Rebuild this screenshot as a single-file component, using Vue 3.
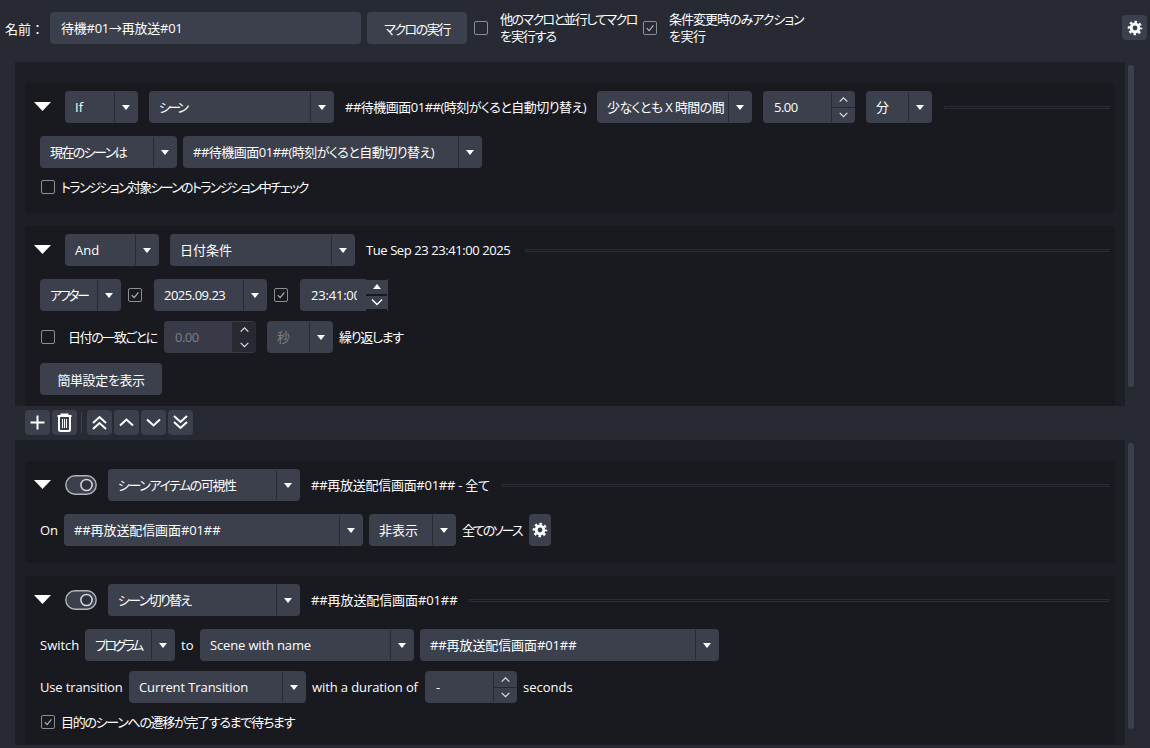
<script setup>
const combo = (t, w, ls = 0, extra = {}) => ({ k: 'combo', t, w, ls, ...extra })
const text = (t, w, ls = 0) => ({ k: 'text', t, w, ls })
const spin = (t, w, extra = {}) => ({ k: 'spin', t, w, ls: -0.5, ...extra })
const check = (w, on = false) => ({ k: 'check', w, on })

const conditions = [
  {
    pad: 'pad18',
    head: [combo('If', 73), combo('シーン', 185, -2.8), text('##待機画面01##(時刻がくると自動切り替え)', 241, -0.5), combo('少なくとも X 時間の間', 155, -0.6), spin('5.00', 92), combo('分', 66)],
    rows: [
      { items: [combo('現在のシーンは', 137, -1.6), combo('##待機画面01##(時刻がくると自動切り替え)', 299, -0.5)], cls: 'mt13' },
      { items: [check(15), text('トランジション対象シーンのトランジション中チェック', undefined, -1.7)], cls: 'short mt11' }
    ]
  },
  {
    pad: 'pad18',
    head: [combo('And', 94), combo('日付条件', 185), text('Tue Sep 23 23:41:00 2025', 147, -0.42)],
    rows: [
      { items: [combo('アフター', 81, -2.4), check(21, true), combo('2025.09.23', 113, -0.5), check(21, true), { k: 'time', t: '23:41:00' }], cls: 'mt13' },
      { items: [check(22), text('日付の一致ごとに', 90, -1.4), spin('0.00', 92, { dis: true }), combo('秒', 66, 0, { dis: true, ml: 5 }), text('繰り返します', undefined, -1.3)], cls: 'mt10' },
      { items: [{ k: 'btn', t: '簡単設定を表示', w: 122, ls: -0.4 }], cls: 'mt10' }
    ]
  }
]

const actions = [
  {
    pad: 'pad17',
    toggle: true,
    head: [combo('シーンアイテムの可視性', 192, -1.45), text('##再放送配信画面#01## - 全て', 179, -0.27)],
    rows: [
      { items: [text('On', 18), combo('##再放送配信画面#01##', 299, -0.1), combo('非表示', 87), text('全てのソース', 61, -2.1), { k: 'gear' }], cls: 'mt13' }
    ]
  },
  {
    pad: 'pad17',
    toggle: true,
    head: [combo('シーン切り替え', 192, -1.7), text('##再放送配信画面#01##', 146, -0.1)],
    rows: [
      { items: [text('Switch', 39), combo('プログラム', 90, -2.6), text('to', 13), combo('Scene with name', 214, -0.15), combo('##再放送配信画面#01##', 299, -0.1)], cls: 'mt13' },
      { items: [text('Use transition', 83, -0.15), combo('Current Transition', 177, -0.1), text('with a duration of', 107, -0.1), { ...spin('-', 92), ls: 0 }, text('seconds')], cls: 'mt10' },
      { items: [check(15, true), text('目的のシーンへの遷移が完了するまで待ちます', undefined, -1.3)], cls: 'short mt11' }
    ]
  }
]

const sections = [
  { name: 'upper', cards: conditions },
  { name: 'lower', cards: actions }
]

const tools = [
  { d: 'M6 13 L12.5 7 L19 13 M6 19 L12.5 13 L19 19' },
  { d: 'M6 15.5 L12.5 9.5 L19 15.5' },
  { d: 'M6 9.5 L12.5 15.5 L19 9.5' },
  { d: 'M6 6 L12.5 12 L19 6 M6 12 L12.5 18 L19 12' }
]

const itemStyle = (it) => ({
  width: it.w ? it.w + 'px' : undefined,
  marginLeft: it.ml ? it.ml + 'px' : undefined,
  letterSpacing: it.ls ? it.ls + 'px' : undefined
})
</script>

<template>
  <div class="app">
    <header class="topbar">
      <span class="name-label">名前：</span>
      <div class="name-input">待機#01→再放送#01</div>
      <button class="btn run">マクロの実行</button>
      <span class="box top-box"></span>
      <span class="wrap-label first"><span class="ln a">他のマクロと並行してマクロ</span><span class="ln b">を実行する</span></span>
      <span class="box top-box second">
        <svg viewBox="0 0 14 14" class="tick"><path d="M3.2 7.2 L6 10 L11 4" /></svg>
      </span>
      <span class="wrap-label"><span class="ln c">条件変更時のみアクション</span><span class="ln d">を実行</span></span>
      <button class="icon-btn top-gear">
        <svg viewBox="0 0 16 16" class="gear"><circle cx="8" cy="8" r="3.9" /><circle cx="8" cy="8" r="6.2" class="teeth" /></svg>
      </button>
    </header>

    <template v-for="(section, si) in sections" :key="section.name">
      <section class="band" :class="section.name">
        <div class="panel">
          <article v-for="(card, ci) in section.cards" :key="ci" class="card" :class="card.pad">
            <div class="row head">
              <span class="collapse"></span>
              <svg v-if="card.toggle" viewBox="0 0 32 20" class="toggle">
                <rect x="0.8" y="0.8" width="30.4" height="18.4" rx="9.2" />
                <circle cx="21.5" cy="10" r="5.6" />
              </svg>
              <template v-for="(it, ii) in card.head" :key="ii">
                <div v-if="it.k === 'combo'" class="combo" :style="itemStyle(it)">
                  <span class="val">{{ it.t }}</span><span class="arrow"></span>
                </div>
                <span v-else-if="it.k === 'text'" class="txt" :style="itemStyle(it)">{{ it.t }}</span>
                <div v-else-if="it.k === 'spin'" class="spin" :style="itemStyle(it)">
                  <span class="val">{{ it.t }}</span>
                  <span class="steps">
                    <svg viewBox="0 0 24 15"><path d="M8 10 L12 6 L16 10" /></svg>
                    <svg viewBox="0 0 24 15"><path d="M8 5 L12 9 L16 5" /></svg>
                  </span>
                </div>
              </template>
              <span class="rule"></span>
            </div>
            <div v-for="(row, ri) in card.rows" :key="ri" class="row body" :class="row.cls">
              <template v-for="(it, ii) in row.items" :key="ii">
                <div v-if="it.k === 'combo'" class="combo" :class="{ dis: it.dis }" :style="itemStyle(it)">
                  <span class="val">{{ it.t }}</span><span class="arrow"></span>
                </div>
                <span v-else-if="it.k === 'text'" class="txt" :style="itemStyle(it)">{{ it.t }}</span>
                <div v-else-if="it.k === 'spin'" class="spin" :class="{ dis: it.dis }" :style="itemStyle(it)">
                  <span class="val">{{ it.t }}</span>
                  <span class="steps">
                    <svg viewBox="0 0 24 15"><path d="M8 10 L12 6 L16 10" /></svg>
                    <svg viewBox="0 0 24 15"><path d="M8 5 L12 9 L16 5" /></svg>
                  </span>
                </div>
                <span v-else-if="it.k === 'check'" class="check-cell" :style="itemStyle(it)">
                  <span class="box">
                    <svg v-if="it.on" viewBox="0 0 14 14" class="tick"><path d="M3.2 7.2 L6 10 L11 4" /></svg>
                  </span>
                </span>
                <button v-else-if="it.k === 'btn'" class="btn" :style="itemStyle(it)">{{ it.t }}</button>
                <button v-else-if="it.k === 'gear'" class="icon-btn row-gear">
                  <svg viewBox="0 0 16 16" class="gear"><circle cx="8" cy="8" r="3.9" /><circle cx="8" cy="8" r="6.2" class="teeth" /></svg>
                </button>
                <div v-else-if="it.k === 'time'" class="time">
                  <span class="time-val"><span class="time-clip">{{ it.t }}</span></span>
                  <span class="time-steps">
                    <span class="tstep"><span class="up-tri"></span></span>
                    <span class="tstep"><svg viewBox="0 0 20 13"><path d="M5 3.5 L10 8.5 L15 3.5" /></svg></span>
                  </span>
                </div>
              </template>
            </div>
          </article>
        </div>
        <div class="gutter"><span class="thumb"></span></div>
      </section>

      <nav v-if="si === 0" class="toolbar">
        <button class="icon-btn tool">
          <svg viewBox="0 0 25 25" class="tool-svg"><path d="M12.5 5.5 V19.5 M5.5 12.5 H19.5" /></svg>
        </button>
        <button class="icon-btn tool">
          <svg viewBox="0 0 25 25" class="tool-svg"><path d="M5.5 6 H19.5 M9.5 6 V4.5 H15.5 V6 M7 6 V19.5 Q7 21 8.5 21 H16.5 Q18 21 18 19.5 V6" /><path class="thin" d="M10.5 9 V18 M12.5 9 V18 M14.5 9 V18" /></svg>
        </button>
        <span class="tool-sep"></span>
        <button v-for="(tool, ti) in tools" :key="ti" class="icon-btn tool">
          <svg viewBox="0 0 25 25" class="tool-svg"><path :d="tool.d" /></svg>
        </button>
      </nav>
    </template>
  </div>
</template>

<style scoped>
.app {
  width: 1150px;
  height: 748px;
  overflow: hidden;
  background: #272a33;
  color: #fff;
  font-family: "Open Sans", "Noto Sans CJK JP", sans-serif;
  font-size: 13px;
  font-feature-settings: "palt";
}
button {
  font: inherit;
  font-feature-settings: inherit;
  color: inherit;
  border: 0;
  padding: 0;
}
.topbar {
  height: 62px;
  box-sizing: border-box;
  padding: 12px 3px 18px 5px;
  display: flex;
  align-items: center;
}
.name-label { width: 45px; white-space: nowrap; font-feature-settings: normal; }
.name-input {
  width: 311px;
  height: 32px;
  box-sizing: border-box;
  padding-left: 11px;
  line-height: 32px;
  background: #3c404d;
  border-radius: 4px;
  letter-spacing: -0.25px;
}
.btn {
  height: 32px;
  background: #3c404d;
  border-radius: 4px;
  text-align: center;
  white-space: nowrap;
  flex: none;
}
.run { width: 100px; margin-left: 6px; letter-spacing: -1.5px; }
.box {
  width: 14px;
  height: 14px;
  box-sizing: border-box;
  border: 1px solid #8c8e95;
  border-radius: 2px;
  display: block;
  flex: none;
}
.top-box { margin-left: 7px; margin-right: 12px; }
.top-box.second { margin-left: 0; }
.tick { display: block; width: 12px; height: 12px; fill: none; stroke: #b8b9bd; stroke-width: 1.3; }
.wrap-label { line-height: 17px; white-space: nowrap; width: 136px; flex: none; }
.wrap-label.first { margin-right: 7px; }
.ln { display: block; }
.ln.a { letter-spacing: -1.6px; }
.ln.b { letter-spacing: -1.1px; }
.ln.c { letter-spacing: -1px; }
.ln.d { letter-spacing: -0.5px; }
.icon-btn {
  background: #3c404d;
  border-radius: 4px;
  display: flex;
  align-items: center;
  justify-content: center;
  flex: none;
}
.top-gear {
  width: 25px;
  height: 25px;
  margin-left: auto;
  align-self: flex-start;
  margin-top: 3px;
}
.gear { width: 16px; height: 16px; fill: none; stroke: #fff; stroke-width: 3; }
.gear .teeth { stroke-width: 2.2; stroke-dasharray: 2.5 2.37; stroke-dashoffset: 1.25; }
.band { display: flex; overflow: hidden; }
.band.upper { height: 344px; }
.band.lower { height: 305px; }
.panel {
  margin-left: 15px;
  width: 1110px;
  box-sizing: border-box;
  padding: 21px 10px 0;
  background: #1d1f27;
  display: flex;
  flex-direction: column;
  gap: 13px;
  flex: none;
}
.gutter { flex: 1; padding: 3px 0 0 3px; }
.thumb { display: block; width: 6px; background: #3c404d; border-radius: 3px; }
.upper .thumb { height: 322px; }
.lower .thumb { height: 286px; }
.card {
  background: #191a1f;
  border-radius: 4px;
  padding-top: 8px;
  flex: none;
}
.pad18 { padding-bottom: 18px; }
.pad17 { padding-bottom: 17px; }
.row { display: flex; align-items: center; height: 32px; }
.head { gap: 11px; padding-right: 6px; }
.body { gap: 6px; padding-left: 15px; }
.short { height: 16px; }
.mt10 { margin-top: 10px; }
.mt11 { margin-top: 11px; }
.mt13 { margin-top: 13px; }
.collapse {
  width: 17px;
  height: 9px;
  margin-left: 9px;
  margin-right: 3px;
  margin-top: -1px;
  background: #fff;
  clip-path: polygon(0 0, 100% 0, 50% 100%);
  flex: none;
}
.toggle { width: 32px; height: 20px; flex: none; }
.toggle rect { fill: #3c404d; stroke: #b4b5ba; stroke-width: 1.4; }
.toggle circle { fill: #2e313b; stroke: #d6d7da; stroke-width: 1.5; }
.combo, .spin {
  height: 32px;
  background: #3c404d;
  border-radius: 4px;
  display: flex;
  flex: none;
  overflow: hidden;
}
.val {
  flex: 1;
  min-width: 0;
  padding-left: 10px;
  line-height: 32px;
  white-space: nowrap;
  overflow: hidden;
}
.arrow {
  width: 24px;
  flex: none;
  position: relative;
  box-sizing: border-box;
  margin: 1px 0;
  border-left: 1px solid #272a33;
}
.arrow::after {
  content: "";
  position: absolute;
  left: 7px;
  top: 13px;
  border-left: 4.5px solid transparent;
  border-right: 4.5px solid transparent;
  border-top: 5px solid #fff;
}
.spin .val { padding-left: 11px; }
.steps {
  width: 24px;
  flex: none;
  box-sizing: border-box;
  border-left: 1px solid #272a33;
  margin: 1px 0;
  display: flex;
  flex-direction: column;
}
.steps svg {
  display: block;
  width: 23px;
  height: 15px;
  fill: none;
  stroke: #e4e4e6;
  stroke-width: 1.2;
}
.steps svg:first-child { border-bottom: 1px solid #272a33; }
.spin.dis { background: #383b47; }
.spin.dis .steps { background: #272a33; }
.dis .val { color: #7d7f86; }
.txt { white-space: nowrap; flex: none; line-height: 16px; }
.check-cell { padding-left: 1px; box-sizing: border-box; flex: none; }
.rule {
  flex: 1;
  height: 3px;
  box-sizing: border-box;
  border: 1px solid #2b2d36;
  margin-left: 1px;
}
.row-gear { width: 22px; height: 32px; }
.time { width: 88px; height: 32px; display: flex; flex: none; }
.time-val {
  width: 66px;
  flex: none;
  background: #3c404d;
  border-radius: 4px 0 0 4px;
  padding-left: 11px;
  box-sizing: border-box;
  line-height: 32px;
  letter-spacing: -0.2px;
}
.time-clip { display: block; width: 46px; overflow: hidden; white-space: nowrap; }
.time-steps {
  width: 22px;
  box-sizing: border-box;
  border-right: 1px solid #3c404d;
  padding: 1px 0 2px;
  display: flex;
  flex-direction: column;
  gap: 2px;
}
.tstep {
  flex: 1;
  background: #3c404d;
  display: flex;
  align-items: center;
  justify-content: center;
}
.tstep svg { width: 20px; height: 13px; fill: none; stroke: #fff; stroke-width: 1.4; }
.up-tri {
  border-left: 4.5px solid transparent;
  border-right: 4.5px solid transparent;
  border-bottom: 5px solid #fff;
}
.toolbar {
  height: 34px;
  box-sizing: border-box;
  padding: 4px 0 0 25px;
  display: flex;
  align-items: flex-start;
  gap: 2px;
}
.tool { width: 25px; height: 25px; }
.tool-svg { width: 25px; height: 25px; fill: none; stroke: #fff; stroke-width: 2; }
.tool-svg .thin { stroke-width: 1; }
.tool-sep { width: 1px; height: 21px; margin: 2px 3px 0 2px; background: #3c404d; }
</style>

<style>
body { background: #272a33; }
</style>
